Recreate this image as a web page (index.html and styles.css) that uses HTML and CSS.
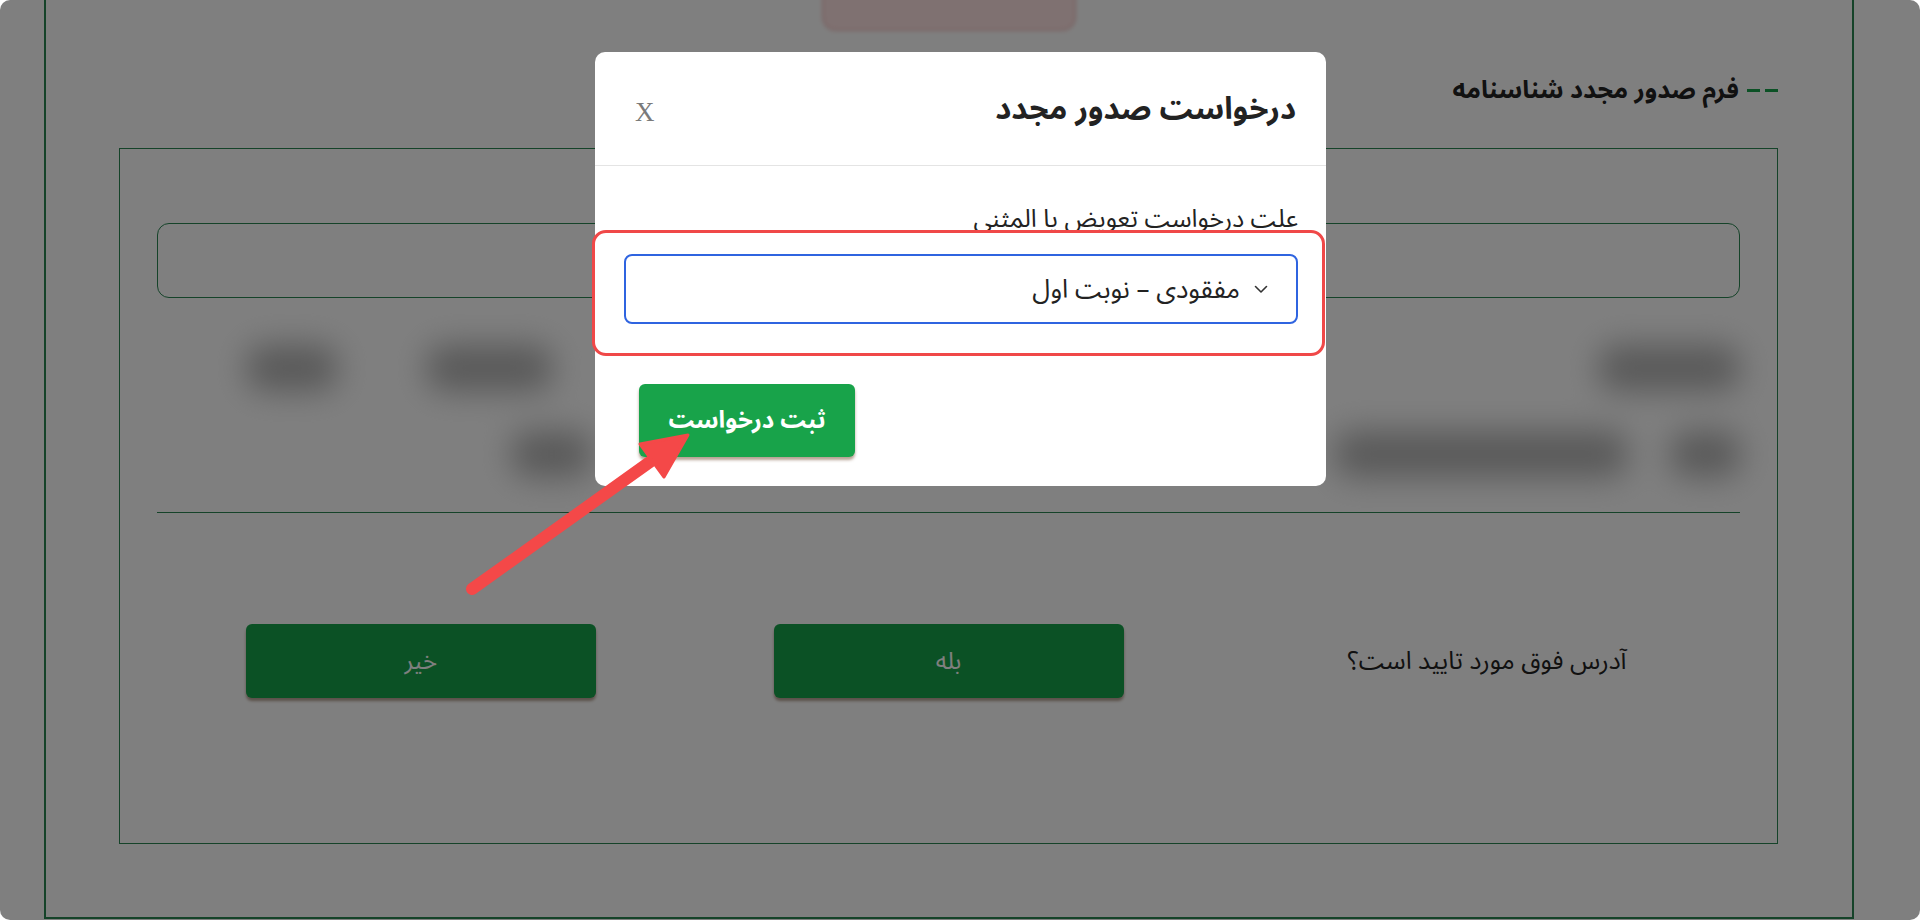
FILE: index.html
```html
<!DOCTYPE html>
<html lang="fa">
<head>
<meta charset="utf-8">
<title>درخواست صدور مجدد</title>
<link rel="stylesheet" href="styles.css">
</head>
<body>
<div class="screen">
  <div class="page">
    <div class="outer">
      <div class="top-badge"></div>
      <div class="section-title">
        <span class="dash"><i></i><i></i></span>
        <span class="title-text">فرم صدور مجدد شناسنامه</span>
      </div>
      <div class="inner">
        <div class="field"></div>
        <div class="blurred">
          <div class="brow brow1">
            <span class="blob b1"></span>
            <span class="blob b2"></span>
            <span class="blob b3"></span>
          </div>
          <div class="brow brow2">
            <span class="blob b4"></span>
            <span class="blob b5"></span>
            <span class="blob b6"></span>
          </div>
        </div>
        <div class="sep"></div>
        <div class="confirm">
          <div class="cell q">آدرس فوق مورد تایید است؟</div>
          <div class="cell"><button class="gbtn">بله</button></div>
          <div class="cell"><button class="gbtn">خیر</button></div>
        </div>
      </div>
    </div>
  </div>

  <div class="backdrop"></div>

  <div class="modal">
    <div class="modal-header">
      <div class="modal-title">درخواست صدور مجدد</div>
      <div class="close">X</div>
    </div>
    <div class="modal-body">
      <div class="label">علت درخواست تعویض یا المثنی</div>
      <div class="highlight">
        <div class="select">
          <svg class="chev" width="14" height="9" viewBox="0 0 14 9"><polyline points="1.5,1.5 7,7 12.5,1.5" fill="none" stroke="#333" stroke-width="1.6" stroke-linecap="round" stroke-linejoin="round"/></svg>
          <span class="select-text">مفقودی – نوبت اول</span>
        </div>
      </div>
      <div class="actions">
        <button class="submit">ثبت درخواست</button>
      </div>
    </div>
  </div>

  <svg class="arrow" width="1920" height="920" viewBox="0 0 1920 920">
    <line x1="472" y1="589" x2="654" y2="459" stroke="#f44848" stroke-width="12" stroke-linecap="round"/>
    <polygon points="688,435 640,444 664,477" fill="#f44848" stroke="#f44848" stroke-width="3" stroke-linejoin="round"/>
  </svg>
</div>
</body>
</html>
```

FILE: styles.css
```css
* { box-sizing: border-box; }

html, body {
  margin: 0;
  padding: 0;
  background: #ffffff;
}

body {
  font-family: "Noto Sans Arabic", "DejaVu Sans", sans-serif;
  color: #222;
}

.screen {
  position: relative;
  width: 1920px;
  height: 920px;
  overflow: hidden;
  border-radius: 10px;
  background: #ffffff;
}

.page {
  direction: rtl;
  padding: 0 66px 0 44px;
}

.outer {
  display: flow-root;
  height: 919px;
  border: 2px solid #2a8652;
  border-top: none;
  padding: 0 74px 0 73px;
}

.top-badge {
  width: 254px;
  height: 71px;
  margin: -40px auto 0;
  background: #ffe3e3;
  border: 2px solid #f3c6c6;
  border-radius: 14px;
  filter: blur(2px);
}

.section-title {
  display: flex;
  align-items: center;
  gap: 8px;
  margin-top: 40px;
  height: 38px;
}

.dash {
  display: flex;
  gap: 5px;
  width: 31px;
}
.dash i {
  display: block;
  width: 13px;
  height: 3px;
  background: #16a34a;
}

.title-text {
  font-size: 25px;
  font-weight: bold;
  color: #222;
}

.inner {
  margin-top: 39px;
  height: 696px;
  border: 1px solid #2a8652;
  padding: 74px 37px 0;
}

.field {
  height: 75px;
  border: 1px solid #2a8652;
  border-radius: 12px;
}

.blurred {
  direction: ltr;
  margin-top: 39px;
  height: 157px;
  padding-top: 8px;
  filter: blur(16px);
}

.brow {
  display: flex;
  height: 46px;
}
.brow2 { margin-top: 40px; }

.blob {
  display: block;
  height: 46px;
  background: #b2b2b2;
  border-radius: 16px;
}
.b1 { margin-left: 90px; width: 90px; }
.b2 { margin-left: 90px; width: 125px; }
.b3 { margin-left: auto; margin-right: 1px; width: 140px; }
.b4 { margin-left: 355px; width: 80px; }
.b5 { margin-left: 744px; width: 297px; }
.b6 { margin-left: 44px; width: 70px; }

.sep {
  margin-top: 18px;
  height: 1px;
  background: #2a8652;
}

.confirm {
  display: grid;
  grid-template-columns: 1fr 1fr 1fr;
  margin-top: 111px;
  height: 74px;
}

.cell {
  display: flex;
  align-items: center;
  justify-content: center;
}

.q {
  padding-left: 22px;
  font-size: 25px;
  color: #222;
}

.gbtn {
  width: 350px;
  height: 74px;
  border: none;
  border-radius: 6px;
  background: #16a34a;
  color: #ffffff;
  font-family: inherit;
  font-size: 24px;
  box-shadow: 0 3px 3px rgba(110, 70, 40, 0.5);
}

.backdrop {
  position: absolute;
  inset: 0;
  background: rgba(0, 0, 0, 0.5);
}

.modal {
  position: absolute;
  left: 595px;
  top: 52px;
  width: 731px;
  direction: rtl;
  background: #ffffff;
  border-radius: 10px;
}

.modal-header {
  display: flex;
  align-items: center;
  justify-content: space-between;
  height: 114px;
  padding: 0 30px 0 40px;
  border-bottom: 1px solid #e4e4e4;
}

.modal-title {
  font-size: 31px;
  font-weight: bold;
  color: #222;
}

.close {
  padding-top: 8px;
  font-family: "Liberation Serif", serif;
  font-size: 27px;
  color: #7a7a7a;
}

.modal-body {
  padding: 0 28px 29px 29px;
}

.label {
  margin-top: 37px;
  margin-bottom: -5px;
  font-size: 25px;
  line-height: 32px;
  color: #222;
}

.highlight {
  position: relative;
  margin: 0 -27px 0 -32px;
  padding: 21px 24px 29px 29px;
  background: #ffffff;
  border: 3px solid #f04848;
  border-radius: 14px;
}

.select {
  display: flex;
  align-items: center;
  gap: 14px;
  height: 70px;
  padding: 0 28px;
  border: 2px solid #2f64e0;
  border-radius: 8px;
}

.chev { display: block; }

.select-text {
  font-size: 26px;
  color: #222;
}

.actions {
  display: flex;
  justify-content: flex-end;
  margin-top: 28px;
}

.submit {
  width: 216px;
  height: 73px;
  margin-left: 15px;
  border: none;
  border-radius: 6px;
  background: #18a34a;
  color: #ffffff;
  font-family: inherit;
  font-size: 24px;
  font-weight: bold;
  box-shadow: 0 3px 3px rgba(110, 70, 40, 0.5);
}

.arrow {
  position: absolute;
  left: 0;
  top: 0;
  pointer-events: none;
}
```
